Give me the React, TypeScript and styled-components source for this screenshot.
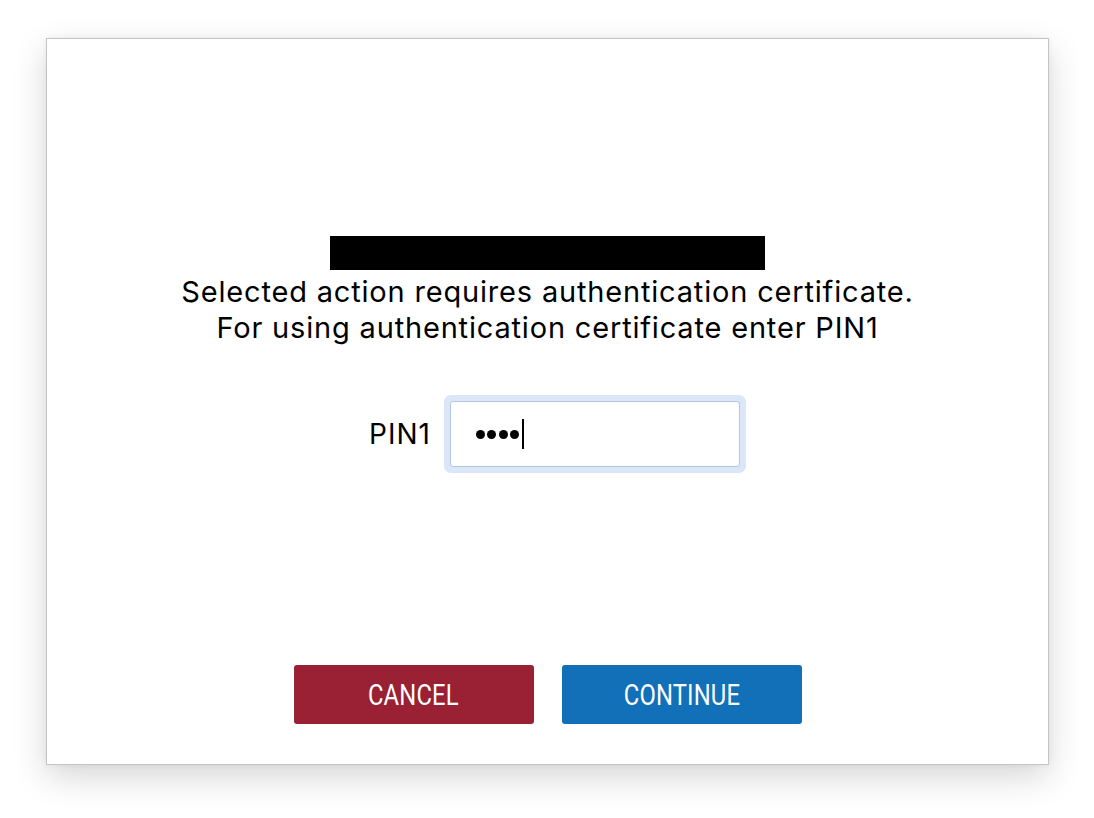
import React from "react";
import styled, { createGlobalStyle } from "styled-components";

const Global = createGlobalStyle`
  html, body { margin: 0; padding: 0; background: #ffffff; }
  body { font-family: Inter, "Liberation Sans", Arial, sans-serif; }
`;

const Stage = styled.div`
  width: 1094px;
  height: 818px;
  box-sizing: border-box;
  padding: 38px 0 0 46px;
  background: #ffffff;
`;

const Window = styled.div`
  width: 1003px;
  height: 727px;
  box-sizing: border-box;
  border: 1px solid #c4c4c4;
  background: #ffffff;
  box-shadow: 0 12px 32px rgba(0, 0, 0, 0.16), 0 0 6px rgba(0, 0, 0, 0.06);
  display: flex;
  flex-direction: column;
  align-items: center;
  padding-top: 197px;
`;

const Redacted = styled.div`
  width: 435px;
  height: 34px;
  background: #000000;
`;

const Message = styled.p`
  margin: 4px 0 0;
  font-family: Inter, "Liberation Sans", Arial, sans-serif;
  font-size: 29px;
  line-height: 36px;
  letter-spacing: 0.82px;
  color: #000000;
  text-align: center;
`;

const PinRow = styled.div`
  margin-top: 49px;
  display: flex;
  align-items: center;
  gap: 13px;
  margin-left: 20px;
`;

const PinLabel = styled.label`
  font-family: Inter, "Liberation Sans", Arial, sans-serif;
  font-size: 28px;
  letter-spacing: 1px;
  color: #000000;
`;

const FocusRing = styled.div`
  padding: 6px;
  border-radius: 7px;
  background: #dbe6f8;
  display: flex;
`;

const PinInput = styled.div`
  width: 290px;
  height: 66px;
  box-sizing: border-box;
  border: 1px solid #b3c6e2;
  border-radius: 3px;
  background: #ffffff;
  display: flex;
  align-items: center;
  padding-left: 25px;
  color: #000;
`;

const Dots = styled.span`
  display: flex;
  gap: 2.5px;
`;

const Dot = styled.span`
  width: 9px;
  height: 9px;
  border-radius: 50%;
  background: #000;
`;

const Caret = styled.span`
  width: 2px;
  height: 30px;
  background: #000;
  margin-left: 3px;
`;

const Buttons = styled.div`
  margin-top: auto;
  margin-bottom: 40px;
  display: flex;
  gap: 28px;
`;

const Button = styled.button<{ $tone: "cancel" | "continue" }>`
  width: 240px;
  height: 59px;
  border: none;
  border-radius: 3px;
  background: ${(p) => (p.$tone === "cancel" ? "#9a2033" : "#1270b9")};
  color: #ffffff;
  cursor: pointer;
  display: flex;
  align-items: center;
  justify-content: center;
  padding: 0;
`;

const ButtonText = styled.span`
  font-family: Roboto, sans-serif;
  font-size: 29px;
  font-weight: 400;
  display: inline-block;
  transform: scaleX(0.82);
  letter-spacing: 0.2px;
`;

export default function App() {
  return (
    <>
      <Global />
      <Stage>
        <Window>
          <Redacted />
          <Message>
            Selected action requires authentication certificate.
            <br />
            For using authentication certificate enter PIN1
          </Message>
          <PinRow>
            <PinLabel>PIN1</PinLabel>
            <FocusRing>
              <PinInput aria-label="PIN1">
                <Dots>
                  <Dot />
                  <Dot />
                  <Dot />
                  <Dot />
                </Dots>
                <Caret />
              </PinInput>
            </FocusRing>
          </PinRow>
          <Buttons>
            <Button $tone="cancel">
              <ButtonText>CANCEL</ButtonText>
            </Button>
            <Button $tone="continue">
              <ButtonText>CONTINUE</ButtonText>
            </Button>
          </Buttons>
        </Window>
      </Stage>
    </>
  );
}
